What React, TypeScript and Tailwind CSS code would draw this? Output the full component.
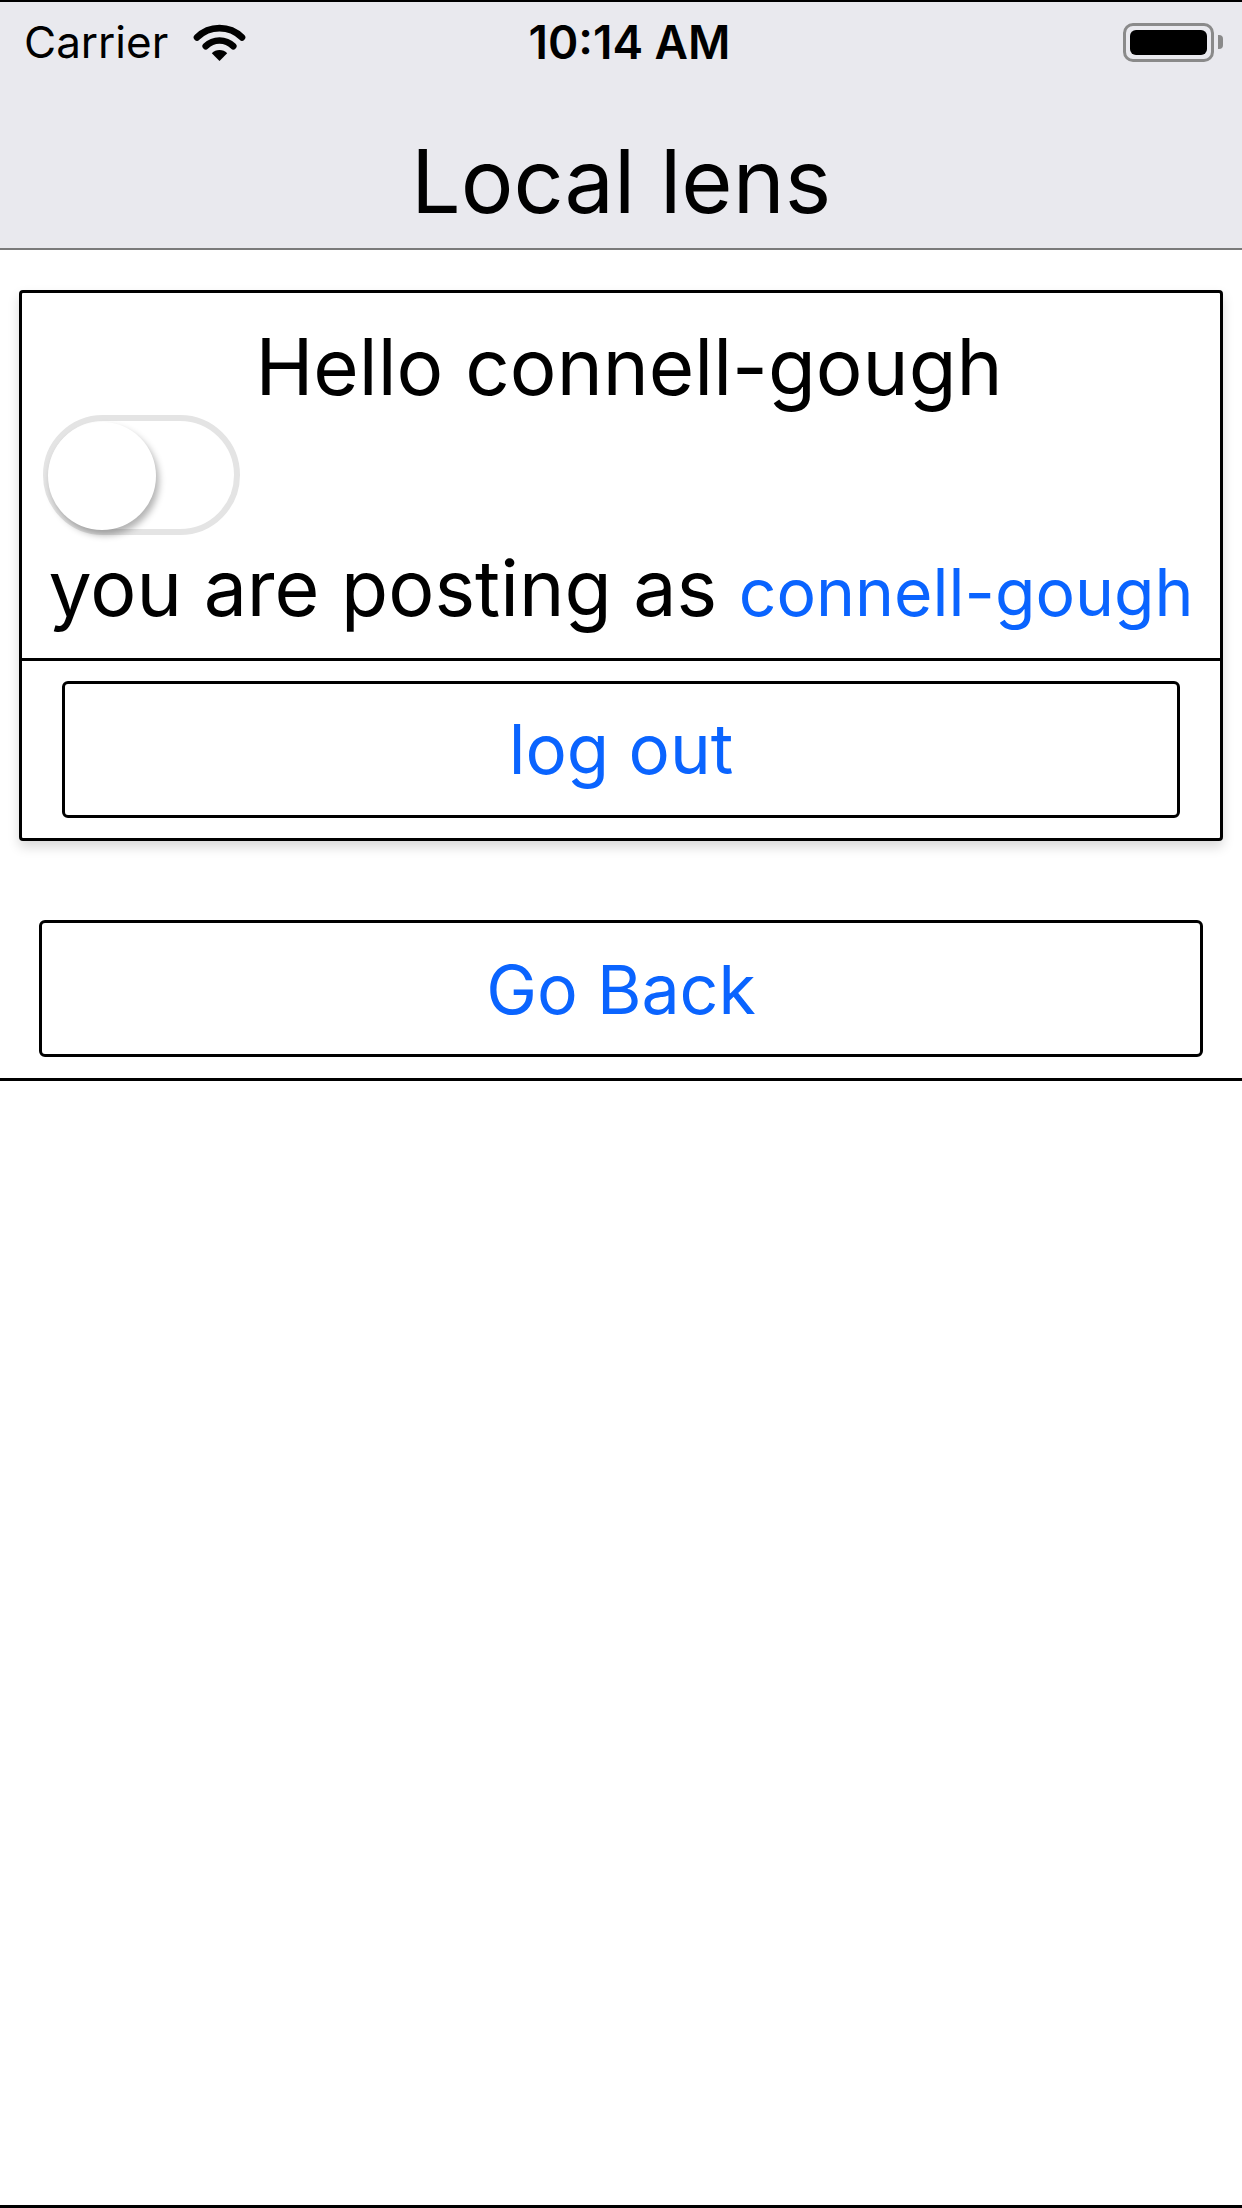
export default function App() {
  return (
    <div className="w-[1242px] h-[2208px] bg-white flex flex-col font-['Inter',sans-serif] text-black">
      <div className="h-[2px] bg-black shrink-0" />
      <div className="bg-[#e9e9ee] h-[248px] border-b-2 border-[#7a7a7a] flex flex-col shrink-0">
        <div className="h-[80px] grid grid-cols-3 items-center pl-[24px] pr-[19px]">
          <div className="flex items-center gap-[24px]">
            <span className="text-[44px] leading-none">Carrier</span>
            <svg width="55" height="38" viewBox="0 0 53 37">
              <path d="M4.6 14.1 A31 31 0 0 1 48.4 14.1" fill="none" stroke="black" strokeWidth="6.5" strokeLinecap="round" />
              <path d="M13.1 22.6 A19 19 0 0 1 39.9 22.6" fill="none" stroke="black" strokeWidth="6.5" strokeLinecap="round" />
              <path d="M26.5 37 L19 29.5 A10.6 10.6 0 0 1 34 29.5 Z" fill="black" />
            </svg>
          </div>
          <div className="flex justify-center">
            <span className="text-[46px] leading-none font-semibold pl-[12px]">10:14 AM</span>
          </div>
          <div className="flex justify-end items-center">
            <div className="w-[91px] h-[39px] rounded-[10px] border-[3px] border-[#8a8a8a] p-[4px]">
              <div className="w-full h-full rounded-[6px] bg-black" />
            </div>
            <div className="w-[5px] h-[14px] rounded-r-[4px] bg-[#8a8a8a] ml-[4px]" />
          </div>
        </div>
        <div className="flex-1 flex items-center justify-center pt-[32px]">
          <h1 className="text-[88px] leading-none font-normal">Local lens</h1>
        </div>
      </div>

      <div className="mx-[19px] mt-[40px] border-[3px] border-black rounded-[4px] shadow-[0_6px_12px_rgba(0,0,0,0.15)] bg-white flex flex-col">
        <p className="mt-[35px] text-center text-[78px] leading-none pl-[16px]">Hello connell-gough</p>
        <div className="mt-[9px] ml-[21px]">
          <div className="relative w-[197px] h-[120px] rounded-full border-[6px] border-[#e4e4e4] bg-white">
            <div className="absolute left-[-1px] top-[1px] w-[108px] h-[108px] rounded-full bg-white shadow-[3px_5px_7px_rgba(0,0,0,0.3)]" />
          </div>
        </div>
        <p className="mt-[15px] text-center text-[77px] leading-none">
          you are posting as <span className="text-[66px] text-[#0a64ff]">connell-gough</span>
        </p>
        <div className="mt-[31px] h-[3px] bg-black" />
        <div className="px-[40px] py-[20px]">
          <button className="w-full h-[137px] border-[3px] border-black rounded-[6px] flex items-center justify-center text-[69px] leading-none text-[#0a64ff]">
            log out
          </button>
        </div>
      </div>

      <button className="mx-[39px] mt-[79px] h-[137px] border-[3px] border-black rounded-[6px] flex items-center justify-center text-[68px] leading-none text-[#0a64ff] shrink-0">
        Go Back
      </button>
      <div className="mt-[21px] h-[3px] bg-black shrink-0" />
      <div className="mt-auto h-[3px] bg-black shrink-0" />
    </div>
  );
}
